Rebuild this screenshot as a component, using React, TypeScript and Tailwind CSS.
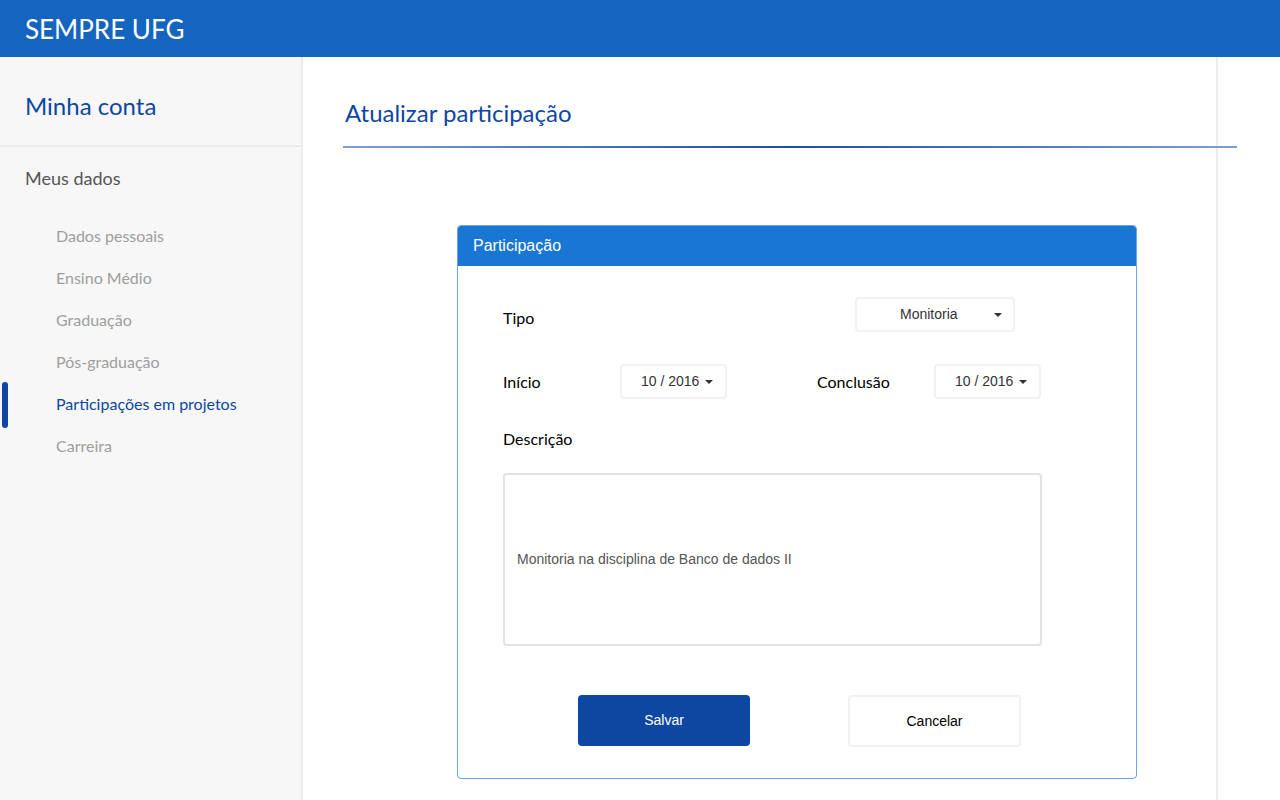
import { useState } from 'react'

const heading = { fontFamily: 'Lato, "Open Sans", sans-serif' }
const body = { fontFamily: '"Liberation Sans", Arial, sans-serif' }

function Caret() {
  return <span className="inline-block w-0 h-0 border-x-[4px] border-x-transparent border-t-[4px] border-t-[#333]" />
}

function SelectBox({ value, className }: { value: string; className: string }) {
  return (
    <div className={`flex items-center rounded-[4px] border-2 border-[#f2f2f2] bg-white text-[14px] text-[#333] ${className}`} style={body}>
      {value}
      <Caret />
    </div>
  )
}

export default function App() {
  const [active] = useState('Participações em projetos')
  const items = ['Dados pessoais', 'Ensino Médio', 'Graduação', 'Pós-graduação', 'Participações em projetos', 'Carreira']

  return (
    <div className="w-[1280px] h-[800px] overflow-hidden bg-white flex flex-col">
      <header className="h-[57px] bg-[#1565c0] flex items-center px-[25px] shrink-0">
        <span className="text-white text-[26px] leading-none" style={heading}>SEMPRE UFG</span>
      </header>

      <div className="flex flex-1 min-h-0">
        <aside className="w-[303px] shrink-0 bg-[#f7f7f7] border-r-2 border-[#ececec] flex flex-col" style={heading}>
          <div className="h-[90px] border-b-2 border-[#ebebeb] flex items-center px-[25px] pt-[10px]">
            <span className="text-[#0d47a1] text-[24px] leading-none">Minha conta</span>
          </div>
          <div className="px-[25px] pt-[22px] text-[18px] text-[#555] leading-none h-[58px]">Meus dados</div>
          <nav className="flex flex-col pt-[10px]">
            {items.map(item => {
              const on = item === active
              return (
                <div key={item} className="relative h-[42px] flex items-center pl-[56px]">
                  {on && <span className="absolute left-[2px] top-[-1px] w-[6px] h-[46px] rounded-full bg-[#0d47a1]" />}
                  <span className={`text-[16px] ${on ? 'text-[#0d47a1]' : 'text-[#9e9e9e]'}`}>{item}</span>
                </div>
              )
            })}
          </nav>
        </aside>

        <main className="w-[915px] shrink-0 border-r-2 border-[#ececec]">
          <div className="pl-[42px] pt-[44px]" style={heading}>
            <h1 className="text-[#0d47a1] text-[24px] leading-none h-[30px]">Atualizar participação</h1>
          </div>
          <div className="mt-[15px] ml-[40px] w-[894px] h-[2px] bg-gradient-to-r from-[#7e9fd3] via-[#1a4ea3] to-[#7e9fd3]" />

          <div className="ml-[154px] mt-[77px] w-[680px] h-[554px] border border-[#6aa3e6] rounded-[4px] overflow-hidden flex flex-col">
            <div className="h-[40px] bg-[#1976d2] flex items-center px-[15px] text-white text-[16px]" style={body}>Participação</div>
            <div className="flex-1 pl-[45px] pr-[95px] pt-[31px]">
              <div className="flex items-center h-[35px]">
                <span className="text-[16px] text-black w-[352px] pt-[6px]" style={heading}>Tipo</span>
                <SelectBox value="Monitoria" className="w-[160px] h-[35px] pl-[43px] gap-[36px]" />
              </div>

              <div className="flex items-center h-[35px] mt-[32px]">
                <span className="text-[16px] text-black w-[117px]" style={heading}>Início</span>
                <SelectBox value="10 / 2016" className="w-[107px] h-[35px] pl-[19px] gap-[6px]" />
                <span className="ml-[90px] text-[16px] text-black w-[117px]" style={heading}>Conclusão</span>
                <SelectBox value="10 / 2016" className="w-[107px] h-[35px] pl-[19px] gap-[6px]" />
              </div>

              <div className="mt-[28px] text-[16px] text-black" style={heading}>Descrição</div>

              <div className="mt-[22px] w-[539px] h-[173px] border-2 border-[#e3e3e3] rounded-[4px] flex items-center px-[12px] text-[14px] text-[#555]" style={body}>
                Monitoria na disciplina de Banco de dados II
              </div>

              <div className="flex mt-[49px] pl-[75px] gap-[98px]" style={body}>
                <button className="w-[172px] h-[51px] rounded-[4px] bg-[#0d47a1] text-white text-[14px]">Salvar</button>
                <button className="w-[173px] h-[52px] rounded-[4px] bg-white border-2 border-[#f2f2f2] text-black text-[14px]">Cancelar</button>
              </div>
            </div>
          </div>
        </main>
        <div className="flex-1" />
      </div>
    </div>
  )
}
